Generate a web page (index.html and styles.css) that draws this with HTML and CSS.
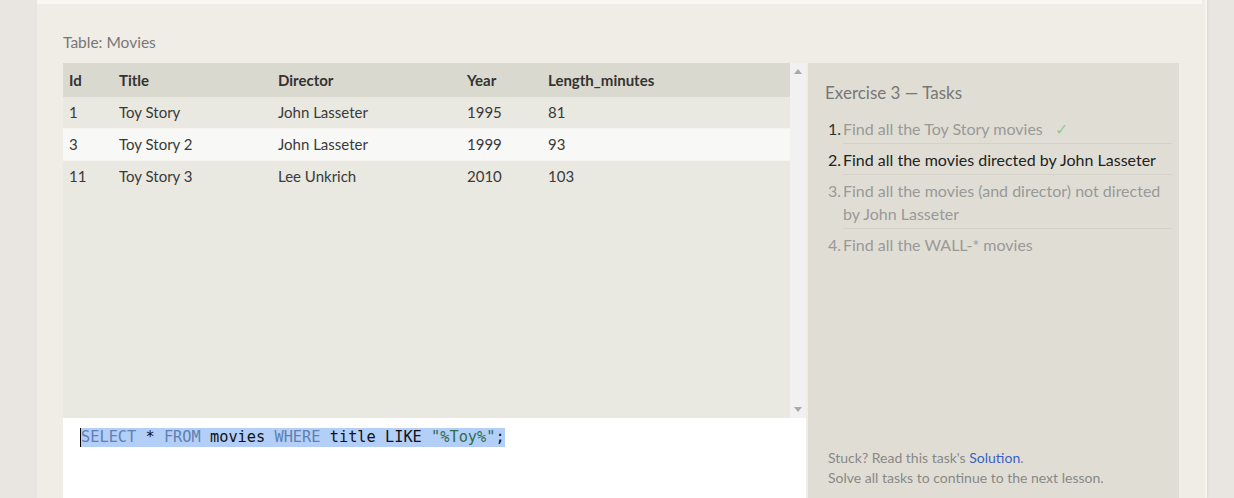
FILE: index.html
```html
<!DOCTYPE html>
<html>
<head>
<meta charset="utf-8">
<link rel="stylesheet" href="styles.css">
</head>
<body>
<div class="page">
  <div class="card">
    <div class="topstrip"></div>
    <div class="content">
      <div class="left">
        <div class="caption">Table: Movies</div>
        <div class="tablewrap">
          <div class="tablearea">
            <table class="movies">
              <thead>
                <tr><th class="c-id">Id</th><th class="c-title">Title</th><th class="c-dir">Director</th><th class="c-year">Year</th><th>Length_minutes</th></tr>
              </thead>
              <tbody>
                <tr><td>1</td><td>Toy Story</td><td>John Lasseter</td><td>1995</td><td>81</td></tr>
                <tr class="hl"><td>3</td><td>Toy Story 2</td><td>John Lasseter</td><td>1999</td><td>93</td></tr>
                <tr class="lastrow"><td>11</td><td>Toy Story 3</td><td>Lee Unkrich</td><td>2010</td><td>103</td></tr>
              </tbody>
            </table>
          </div>
          <div class="scrollbar">
            <svg class="arrow" width="8" height="5" viewBox="0 0 8 5"><path d="M0 5 L4 0 L8 5 Z" fill="#a9a9a9"/></svg>
            <svg class="arrow" width="8" height="5" viewBox="0 0 8 5"><path d="M0 0 L4 5 L8 0 Z" fill="#a9a9a9"/></svg>
          </div>
        </div>
        <div class="editor">
          <div class="codeline"><span class="cursor"></span><span class="sel"><span class="kw">SELECT</span> * <span class="kw">FROM</span> movies <span class="kw">WHERE</span> title LIKE <span class="str">"%Toy%"</span>;</span></div>
        </div>
      </div>
      <div class="right">
        <div class="tasks-title">Exercise 3 — Tasks</div>
        <ol class="tasks">
          <li class="done"><span class="num">1.</span><span class="txt">Find all the Toy Story movies <span class="check">✓</span></span></li>
          <li class="active"><span class="num">2.</span><span class="txt">Find all the movies directed by John Lasseter</span></li>
          <li class="todo"><span class="num">3.</span><span class="txt">Find all the movies (and director) not directed by John Lasseter</span></li>
          <li class="todo last"><span class="num">4.</span><span class="txt">Find all the WALL-* movies</span></li>
        </ol>
        <div class="spacer"></div>
        <div class="hint">
          <p>Stuck? Read this task's <a href="#">Solution</a>.</p>
          <p>Solve all tasks to continue to the next lesson.</p>
        </div>
      </div>
    </div>
  </div>
</div>
</body>
</html>
```

FILE: styles.css
```css
html, body {
  margin: 0;
  padding: 0;
  height: 100%;
  overflow: hidden;
}
body {
  background: #e9e5e1;
  font-family: "Lato", "Noto Sans", sans-serif;
  color: #333;
}
.page {
  padding-left: 37px;
  height: 100%;
}
.card {
  width: 1168px;
  height: 100%;
  background: #f0ede6;
  border-right: 2px solid #f6f4ef;
  box-shadow: 1px 0 2px rgba(0,0,0,0.06);
}
.topstrip {
  height: 4px;
  background: #f8f7f4;
  margin-right: 3px;
}
.content {
  display: flex;
  padding: 0 26px 0 26px;
  gap: 2px;
}
.left {
  width: 743px;
  display: flex;
  flex-direction: column;
}
.caption {
  font-size: 15.5px;
  color: #777;
  height: 59px;
  line-height: 20px;
  padding-top: 28px;
  box-sizing: border-box;
}
.tablewrap {
  display: flex;
  height: 355px;
}
.tablearea {
  width: 727px;
  background: #e9e8e1;
}
.movies {
  width: 100%;
  border-collapse: collapse;
  font-size: 15px;
}
.movies th {
  background: #dad9cf;
  text-align: left;
  font-weight: bold;
  height: 34px;
  padding: 0 6px;
  color: #333;
}
.movies td {
  padding: 5px 6px 6px 6px;
  line-height: 20px;
  color: #3a3a3a;
  border-bottom: 1px solid #f4f3ef;
}
.movies tr.lastrow td {
  border-bottom: none;
}
.movies tr.hl td {
  background: #f8f8f7;
}
.c-id { width: 38px; }
.c-title { width: 147px; }
.c-dir { width: 177px; }
.c-year { width: 69px; }
.scrollbar {
  width: 16px;
  background: #f1f1f1;
  display: flex;
  flex-direction: column;
  justify-content: space-between;
  align-items: center;
  padding: 6px 0;
  box-sizing: border-box;
}
.editor {
  background: #fff;
  height: 90px;
  padding: 10px 0 0 17px;
}
.codeline {
  font-family: "DejaVu Sans Mono", monospace;
  font-size: 15.3px;
  line-height: 19px;
  color: #111;
  display: flex;
  align-items: center;
}
.cursor {
  display: inline-block;
  width: 2px;
  height: 19px;
  background: #000;
  margin-right: -1px;
}
.sel {
  background: #b3cff8;
  white-space: pre;
}
.kw { color: #5f80b0; }
.str { color: #2f6e4c; }
.right {
  width: 371px;
  background: #e0ded4;
  height: 440px;
  margin-top: 59px;
  padding: 19px 7px 0 17px;
  box-sizing: border-box;
  display: flex;
  flex-direction: column;
}
.tasks-title {
  font-size: 17px;
  color: #777;
  line-height: 22px;
}
.tasks {
  list-style: none;
  margin: 9px 0 0 0;
  padding: 0;
  font-size: 16px;
}
.tasks li {
  display: flex;
  line-height: 23px;
}
.tasks .num {
  width: 15px;
  padding-left: 3px;
  flex: none;
  padding-top: 4px;
}
.tasks .txt {
  flex: 1;
  border-bottom: 1px solid #d5d3c9;
  padding: 4px 0 3px 0;
}
.tasks li.last .txt { border-bottom: none; }
.tasks .done .num { color: #333; }
.tasks .done .txt { color: #999; }
.check { color: #9bc79b; margin-left: 8px; }
.tasks .active { color: #222; }
.tasks .todo { color: #999; }
.spacer { flex: 1; }
.hint {
  font-size: 14px;
  color: #888;
  line-height: 20px;
  padding: 0 0 15px 3px;
}
.hint p { margin: 0; }
.hint a { color: #3b5fc8; text-decoration: none; }
```
